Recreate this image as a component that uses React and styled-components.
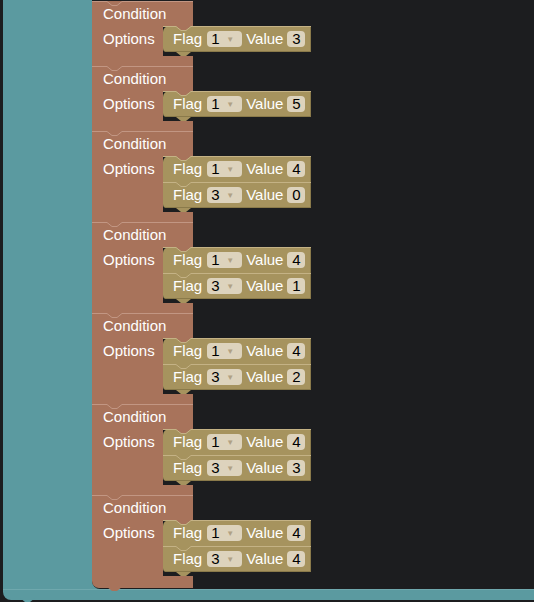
import styled, { createGlobalStyle } from "styled-components";

const GlobalStyle = createGlobalStyle`
  html, body {
    margin: 0;
    padding: 0;
    background: #1c1d1f;
    overflow: hidden;
  }
  body {
    font-family: "Liberation Sans", Arial, sans-serif;
  }
`;

const TEAL = "#5b9aa0";
const BROWN = "#a8735b";
const BROWN_LIGHT = "#c29683";
const OLIVE = "#a6935e";
const OLIVE_LIGHT = "#c4b285";
const DARK = "#1c1d1f";

const conditions = [
  [{ flag: 1, value: 3 }],
  [{ flag: 1, value: 5 }],
  [{ flag: 1, value: 4 }, { flag: 3, value: 0 }],
  [{ flag: 1, value: 4 }, { flag: 3, value: 1 }],
  [{ flag: 1, value: 4 }, { flag: 3, value: 2 }],
  [{ flag: 1, value: 4 }, { flag: 3, value: 3 }],
  [{ flag: 1, value: 4 }, { flag: 3, value: 4 }],
];

const Workspace = styled.div`
  width: 534px;
  height: 602px;
  padding-left: 3px;
  box-sizing: border-box;
  overflow: hidden;
  background: ${DARK};
`;

const Loop = styled.div`
  position: relative;
  height: 600px;
  width: 560px;
  display: flex;
  flex-direction: column;
  background: ${TEAL};
  border-bottom-left-radius: 8px;
`;

const LoopBody = styled.div`
  flex: 1;
  display: flex;
  min-height: 0;
`;

const LoopArm = styled.div`
  width: 89px;
  flex-shrink: 0;
`;

const LoopSlot = styled.div`
  flex: 1;
  background: ${DARK};
  border-bottom-left-radius: 8px;
  padding-top: 1px;
  display: flex;
  flex-direction: column;
  align-items: flex-start;
`;

const LoopFoot = styled.div`
  height: 10px;
  border-top: 1px solid #6fa8ad;
`;

const Deco = styled.svg`
  position: absolute;
  overflow: visible;
  pointer-events: none;
  left: ${(p) => p.$left || 0}px;
  top: ${(p) => (p.$top === undefined ? "auto" : `${p.$top}px`)};
  bottom: ${(p) => (p.$bottom === undefined ? "auto" : `${p.$bottom}px`)};
  z-index: 2;
`;

const CondBlock = styled.div`
  position: relative;
  display: flex;
  flex-direction: column;
  &:last-child > .foot {
    height: 12px;
    border-bottom-left-radius: 7px;
  }
`;

const Label = styled.span`
  color: #fff;
  font-size: 15px;
  line-height: 26px;
  white-space: nowrap;
`;

const CondHead = styled.div`
  position: relative;
  width: 101px;
  height: 25px;
  box-sizing: border-box;
  padding: 1px 0 0 11px;
  background: ${BROWN};
  display: flex;
  align-items: center;
`;

const CondMiddle = styled.div`
  display: flex;
`;

const OptArm = styled.div`
  width: 71px;
  box-sizing: border-box;
  padding-left: 11px;
  background: ${BROWN};
`;

const InputArea = styled.div`
  padding-bottom: 4px;
  min-height: 30px;
  box-sizing: border-box;
  display: flex;
  flex-direction: column;
  align-items: flex-start;
`;

const CondFoot = styled.div`
  width: 101px;
  height: 10px;
  background: ${BROWN};
`;

const FlagStack = styled.div`
  position: relative;
  width: 148px;
  background: ${OLIVE};
  border-radius: 6px 0 0 4px;
  box-shadow: inset -1px -1px 0 #8a7a4a;
`;

const FlagRow = styled.div`
  position: relative;
  height: 26px;
  box-sizing: border-box;
  padding-left: 10px;
  display: flex;
  align-items: center;
`;

const Field = styled.span`
  display: inline-flex;
  align-items: center;
  justify-content: ${(p) => (p.$dropdown ? "space-between" : "center")};
  box-sizing: border-box;
  width: ${(p) => p.$width}px;
  height: 16px;
  margin: 0 ${(p) => p.$after}px 0 ${(p) => p.$before}px;
  padding: ${(p) => (p.$dropdown ? "0 8px 0 4px" : "0")};
  background: #ddd3bd;
  border-radius: 4px;
  color: #000;
  font-size: 15px;
  line-height: 16px;
`;

const Arrow = styled.span`
  font-size: 8px;
  color: #b0a184;
  line-height: 1;
  margin-top: 1px;
`;

function Notch({ width, stroke, fill, top = 0, left = 0, offset = 13 }) {
  const a = offset;
  const pts = `${a},0 ${a + 5},4 ${a + 10},4 ${a + 15},0`;
  return (
    <Deco $left={left} $top={top} width={width} height="6">
      {fill && <polygon points={pts} fill={fill} />}
      <polyline
        points={`0,0.5 ${a},0.5 ${a + 5},4.5 ${a + 10},4.5 ${a + 15},0.5 ${width},0.5`}
        fill="none"
        stroke={stroke}
        strokeWidth="1"
      />
    </Deco>
  );
}

function Tab({ fill, offset = 13, bottom = -4, left = 0 }) {
  const a = offset;
  return (
    <Deco $left={left} $bottom={bottom} width={a + 16} height="4">
      <polygon points={`${a},0 ${a + 5},4 ${a + 10},4 ${a + 15},0`} fill={fill} />
    </Deco>
  );
}

function FlagBlock({ rows }) {
  return (
    <FlagStack>
      {rows.map((r, i) => (
        <FlagRow key={i}>
          <Notch width={148} stroke={OLIVE_LIGHT} fill={i === 0 ? BROWN : null} />
          <Label>Flag</Label>
          <Field $dropdown $width={35} $before={5} $after={4}>
            {r.flag}
            <Arrow>▼</Arrow>
          </Field>
          <Label>Value</Label>
          <Field $width={18} $before={4} $after={0}>
            {r.value}
          </Field>
        </FlagRow>
      ))}
      <Tab fill={OLIVE} />
    </FlagStack>
  );
}

function Condition({ rows, last }) {
  return (
    <CondBlock>
      <CondHead>
        <Notch width={101} stroke={BROWN_LIGHT} offset={15} />
        <Label>Condition</Label>
      </CondHead>
      <CondMiddle>
        <OptArm>
          <Label>Options</Label>
        </OptArm>
        <InputArea>
          <FlagBlock rows={rows} />
        </InputArea>
      </CondMiddle>
      <CondFoot className="foot" />
      {last && <Tab fill={BROWN} offset={15} bottom={-3} />}
    </CondBlock>
  );
}

export default function App() {
  return (
    <>
      <GlobalStyle />
      <Workspace>
        <Loop>
          <LoopBody>
            <LoopArm />
            <LoopSlot>
              {conditions.map((rows, i) => (
                <Condition key={i} rows={rows} last={i === conditions.length - 1} />
              ))}
            </LoopSlot>
          </LoopBody>
          <LoopFoot />
          <Tab fill={TEAL} offset={17} bottom={-2} />
        </Loop>
      </Workspace>
    </>
  );
}
